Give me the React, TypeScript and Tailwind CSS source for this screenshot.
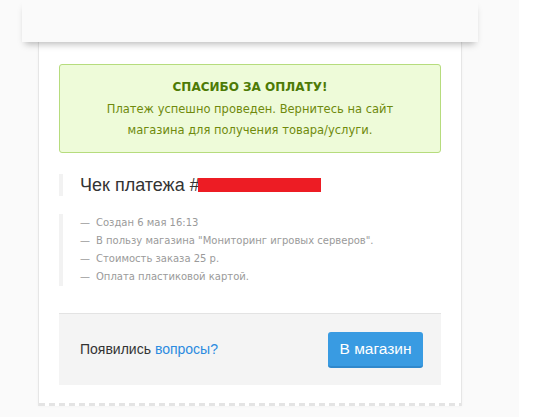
import React from "react";

const items = [
  "Создан 6 мая 16:13",
  "В пользу магазина \"Мониторинг игровых серверов\".",
  "Стоимость заказа 25 р.",
  "Оплата пластиковой картой.",
];

export default function App() {
  return (
    <div className="flex h-[417px] w-full overflow-hidden">
      <div className="w-[519px] shrink-0 bg-[#fafafa]">
        <div className="relative z-10 ml-[22px] h-[42px] w-[456px] bg-[#fafafa] shadow-[0_5px_7px_-3px_rgba(0,0,0,0.28)]" />
        <div className="ml-[38px] w-[424px] border-x border-[#e6e6e6] bg-white shadow-[0_0_3px_rgba(0,0,0,0.04)]">
          <div className="px-[20px] pt-[22px] pb-[18px]">
            <div className="rounded-[3px] border border-[#b6dc7d] bg-[#eefbd9] pt-[12px] pb-[11px] text-center font-['DejaVu_Sans',sans-serif]">
              <div className="text-[12px] leading-[20px] font-bold text-[#4d7a05]">СПАСИБО ЗА ОПЛАТУ!</div>
              <div className="mt-[2px] text-[11.5px] leading-[21px] text-[#6f8a0c]">
                Платеж успешно проведен. Вернитесь на сайт
                <br />
                магазина для получения товара/услуги.
              </div>
            </div>

            <div className="mt-[21px] flex h-[22px] items-center border-l-4 border-[#f2f2f2] pl-[17px]">
              <span className="font-['Liberation_Sans',Arial,sans-serif] text-[18px] leading-[22px] text-[#333]">
                Чек платежа #
              </span>
              <span className="ml-[-2px] inline-block h-[14px] w-[123px] bg-[#ed1c24]" />
            </div>

            <div className="mt-[18px] border-l-4 border-[#f2f2f2] pl-[17px] font-['DejaVu_Sans',sans-serif] text-[10px] leading-[18px] text-[#9a9a9a]">
              {items.map((t) => (
                <div key={t} className="flex">
                  <span className="w-[16px] shrink-0">—</span>
                  <span>{t}</span>
                </div>
              ))}
            </div>

            <div className="mt-[27px] flex h-[72px] items-center justify-between border-t border-[#e3e3e3] bg-[#f4f4f4] pr-[18px] pl-[21px] font-['Liberation_Sans',Arial,sans-serif]">
              <div className="text-[14px] text-[#333]">
                Появились <span className="text-[#2b8be0]">вопросы?</span>
              </div>
              <div className="flex h-[36px] w-[95px] items-center justify-center rounded-[3px] border-b-2 border-[#2f88cc] bg-[#399be2] text-[15.5px] text-white">
                В магазин
              </div>
            </div>
          </div>
          <div className="h-[3px] bg-[repeating-linear-gradient(90deg,#e4e4e4_0px,#e4e4e4_6px,#ffffff_6px,#ffffff_10px)]" />
        </div>
      </div>
      <div className="flex-1 bg-white" />
    </div>
  );
}
